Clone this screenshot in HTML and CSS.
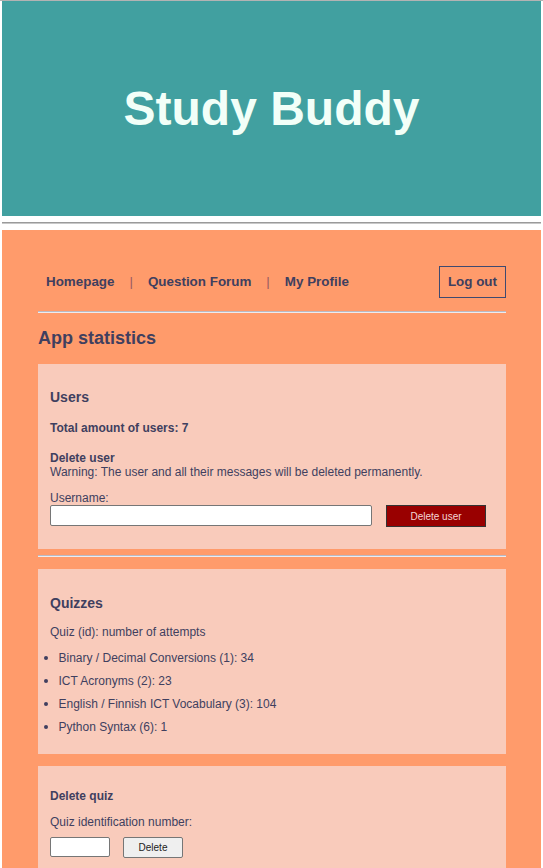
FILE: index.html
```html
<!DOCTYPE html>
<html lang="en">
<head>
<meta charset="utf-8">
<title>Study Buddy - App statistics</title>
<link rel="stylesheet" href="styles.css">
</head>
<body>
<header class="site-header">
  <h1 class="site-title">Study Buddy</h1>
</header>
<hr class="header-rule">
<main class="page">
  <nav class="nav">
    <div class="nav-links">
      <a href="#" class="nav-link">Homepage</a>
      <span class="sep">|</span>
      <a href="#" class="nav-link">Question Forum</a>
      <span class="sep">|</span>
      <a href="#" class="nav-link">My Profile</a>
    </div>
    <button class="logout" type="button">Log out</button>
  </nav>
  <hr class="rule">
  <h2 class="page-title">App statistics</h2>

  <section class="card card-users">
    <h3 class="card-title">Users</h3>
    <p class="total">Total amount of users: 7</p>
    <p class="sub-heading">Delete user</p>
    <p class="warning">Warning: The user and all their messages will be deleted permanently.</p>
    <label class="field-label" for="username">Username:</label>
    <div class="form-row">
      <input class="text-input user-input" id="username" type="text">
      <button class="btn-danger" type="button">Delete user</button>
    </div>
  </section>

  <hr class="rule rule-section">

  <section class="card card-quizzes">
    <h3 class="card-title">Quizzes</h3>
    <p class="legend">Quiz (id): number of attempts</p>
    <ul class="quiz-list">
      <li class="quiz-item">Binary / Decimal Conversions (1): 34</li>
      <li class="quiz-item">ICT Acronyms (2): 23</li>
      <li class="quiz-item">English / Finnish ICT Vocabulary (3): 104</li>
      <li class="quiz-item">Python Syntax (6): 1</li>
    </ul>
  </section>

  <section class="card card-delete">
    <p class="sub-heading">Delete quiz</p>
    <label class="field-label quiz-label" for="quizid">Quiz identification number:</label>
    <div class="form-row quiz-row">
      <input class="text-input quiz-input" id="quizid" type="text">
      <button class="btn-plain" type="button">Delete</button>
    </div>
  </section>
</main>
</body>
</html>
```

FILE: styles.css
```css
html {
  background: #ffffff;
}

body {
  margin: 0;
  padding: 0 2px;
  border-top: 1px solid #b3b3b3;
  font-family: "Liberation Sans", Arial, sans-serif;
  font-size: 12px;
  line-height: 14px;
  color: #403f5f;
}

.site-header {
  height: 215px;
  background: #41a0a0;
  display: flex;
  align-items: center;
  justify-content: center;
}

.site-title {
  margin: 0;
  font-size: 48px;
  line-height: 55px;
  font-weight: bold;
  color: #f2fff8;
}

.header-rule {
  margin: 6px 0;
  height: 0;
  border: 0;
  border-top: 1px solid #9a9a9a;
  border-bottom: 1px solid #c8c8c8;
}

.page {
  background: #ff9b6b;
  padding: 36px 35px 60px 36px;
}

.nav {
  display: flex;
  justify-content: space-between;
  align-items: center;
}

.nav-links {
  display: flex;
  align-items: center;
  padding-left: 8px;
  font-size: 13.4px;
  line-height: 16px;
  font-weight: bold;
}

.nav-link {
  color: inherit;
  text-decoration: none;
}

.sep {
  margin: 0 15px;
  font-weight: normal;
  color: #9a5a62;
}

.logout {
  margin: 0;
  padding: 7px 8px;
  font-family: "Liberation Sans", Arial, sans-serif;
  font-size: 13.4px;
  line-height: 16px;
  font-weight: bold;
  color: #403f5f;
  background: transparent;
  border: 1px solid #3f4a70;
  border-radius: 0;
}

.rule {
  margin: 13px 0 0;
  height: 0;
  border: 0;
  border-top: 1px solid #b9b9c3;
  border-bottom: 1px solid #ececf0;
}

.page-title {
  margin: 15px 0 15px;
  font-size: 18px;
  line-height: 21px;
  font-weight: bold;
}

.card {
  background: #f9cbbb;
  padding: 0 12px;
}

.card-title {
  margin: 0;
  font-size: 14px;
  line-height: 16px;
  font-weight: bold;
}

.card-users {
  padding-top: 25px;
  padding-bottom: 22px;
}

.total {
  margin: 16px 0 0;
  font-weight: bold;
}

.sub-heading {
  margin: 16px 0 0;
  font-weight: bold;
}

.warning {
  margin: 0;
}

.field-label {
  display: block;
  margin-top: 12px;
}

.form-row {
  display: flex;
  align-items: flex-start;
}

.text-input {
  box-sizing: border-box;
  margin: 0;
  padding: 0 3px;
  background: #ffffff;
  border: 1px solid #767676;
  border-radius: 2px;
}

.user-input {
  width: 322px;
  height: 21px;
}

.btn-danger {
  box-sizing: border-box;
  margin: 0 0 0 14px;
  width: 100px;
  height: 22px;
  padding: 0;
  font-family: "Liberation Sans", Arial, sans-serif;
  font-size: 10px;
  color: #f5d5d5;
  background: #990000;
  border: 1px solid #333333;
  border-radius: 0;
}

.rule-section {
  margin: 6px 0 12px;
}

.card-quizzes {
  padding-top: 26px;
  padding-bottom: 15.5px;
}

.legend {
  margin: 14px 0 0;
}

.quiz-list {
  list-style: none;
  margin: 7.5px 0 0 -6.5px;
  padding: 0;
}

.quiz-item {
  display: flex;
  align-items: center;
  line-height: 23px;
}

.quiz-item::before {
  content: "";
  width: 4.5px;
  height: 4.5px;
  border-radius: 50%;
  background: #403f5f;
  margin-right: 10.5px;
  flex: none;
}

.card-delete {
  margin-top: 12px;
  padding-top: 23px;
  padding-bottom: 20px;
}

.card-delete .sub-heading {
  margin-top: 0;
}

.quiz-label {
  margin-top: 12px;
}

.quiz-row {
  margin-top: 8px;
}

.quiz-input {
  width: 60px;
  height: 20px;
}

.btn-plain {
  box-sizing: border-box;
  margin: 0 0 0 13px;
  width: 60px;
  height: 21px;
  padding: 0;
  font-family: "Liberation Sans", Arial, sans-serif;
  font-size: 10px;
  color: #222222;
  background: #efefef;
  border: 1px solid #767676;
  border-radius: 2px;
}
```
